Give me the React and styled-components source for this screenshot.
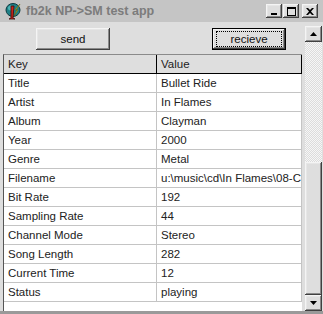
import React from 'react';
import styled, { createGlobalStyle } from 'styled-components';

const rows = [
  ['Title', 'Bullet Ride'],
  ['Artist', 'In Flames'],
  ['Album', 'Clayman'],
  ['Year', '2000'],
  ['Genre', 'Metal'],
  ['Filename', 'u:\\music\\cd\\In Flames\\08-Clayman\\01 - Bullet Ride.mp3'],
  ['Bit Rate', '192'],
  ['Sampling Rate', '44'],
  ['Channel Mode', 'Stereo'],
  ['Song Length', '282'],
  ['Current Time', '12'],
  ['Status', 'playing'],
];

const AppIcon = () => (
  <svg width="17" height="18" viewBox="0 0 17 18">
    <ellipse cx="8" cy="8" rx="7" ry="6.5" fill="#1f7f86" stroke="#0c3a40" strokeWidth="1" />
    <ellipse cx="6" cy="6" rx="3" ry="2.5" fill="#4fb5b5" />
    <path d="M6 4 L9 4 L8 16 L10 17 L4 17 L6 16 Z" fill="#c8241c" stroke="#3a0a08" strokeWidth="0.8" />
    <path d="M15 2 L11 8 L13 8 L9 14 L12 8 L10 8 Z" fill="#f4e13a" stroke="#6b5a00" strokeWidth="0.5" />
  </svg>
);

const CaptionGlyph = ({ kind }) => {
  if (kind === 'min') {
    return (
      <svg width="8" height="8" viewBox="0 0 8 8">
        <rect x="1" y="6" width="6" height="2" fill="#000" />
      </svg>
    );
  }
  if (kind === 'max') {
    return (
      <svg width="9" height="9" viewBox="0 0 9 9">
        <rect x="0.5" y="0.5" width="8" height="8" fill="none" stroke="#000" />
        <rect x="0" y="1" width="9" height="1" fill="#000" />
      </svg>
    );
  }
  return (
    <svg width="8" height="7" viewBox="0 0 8 7">
      <path d="M0 0 L2 0 L4 2 L6 0 L8 0 L5 3.5 L8 7 L6 7 L4 5 L2 7 L0 7 L3 3.5 Z" fill="#000" />
    </svg>
  );
};

const Arrow = ({ up }) => (
  <svg width="7" height="4" viewBox="0 0 7 4">
    <path d={up ? 'M3.5 0 L7 4 L0 4 Z' : 'M0 0 L7 0 L3.5 4 Z'} fill="#000" />
  </svg>
);

const App = () => {
  return (
    <>
      <GlobalStyle />
      <Window>
        <TitleBar>
          <AppIcon />
          <TitleText>fb2k NP-&gt;SM test app</TitleText>
          <CaptionGroup>
            <CaptionButton>
              <CaptionGlyph kind="min" />
            </CaptionButton>
            <CaptionButton>
              <CaptionGlyph kind="max" />
            </CaptionButton>
            <CaptionButton $gap>
              <CaptionGlyph kind="close" />
            </CaptionButton>
          </CaptionGroup>
        </TitleBar>
        <Body>
          <Main>
            <ButtonRow>
              <PushButton $left={33}>send</PushButton>
              <PushButton $left={102} $default>
                <FocusRect>recieve</FocusRect>
              </PushButton>
            </ButtonRow>
            <List>
              <HeaderRow>
                <HeaderCell $key>Key</HeaderCell>
                <HeaderCell>Value</HeaderCell>
              </HeaderRow>
              {rows.map(([k, v]) => (
                <Row key={k}>
                  <Cell $key>{k}</Cell>
                  <Cell>{v}</Cell>
                </Row>
              ))}
            </List>
          </Main>
          <ScrollBar>
            <ScrollButton>
              <Arrow up />
            </ScrollButton>
            <Track />
            <Thumb />
            <ScrollButton>
              <Arrow />
            </ScrollButton>
          </ScrollBar>
        </Body>
      </Window>
    </>
  );
};

export default App;

const GlobalStyle = createGlobalStyle`
  body {
    margin: 0;
    font-family: "Liberation Sans", Arial, sans-serif;
  }
`;

const raised = `
  box-shadow: inset -1px -1px #404040, inset 1px 1px #f4f4f4,
    inset -2px -2px #8a8a8a, inset 2px 2px #e6e6e6;
`;

const Window = styled.div`
  width: 323px;
  height: 314px;
  background: #dedede;
  display: flex;
  flex-direction: column;
  overflow: hidden;
  box-sizing: border-box;
  border-bottom: 3px solid #9a9a9a;
`;

const TitleBar = styled.div`
  height: 22px;
  flex-shrink: 0;
  background: #c5c5c5;
  display: flex;
  align-items: center;
  padding-left: 5px;
`;

const TitleText = styled.div`
  margin-left: 4px;
  font-weight: bold;
  font-size: 12.5px;
  color: #7c7c7c;
`;

const CaptionGroup = styled.div`
  margin-left: auto;
  margin-right: 5px;
  display: flex;
`;

const CaptionButton = styled.div`
  width: 16px;
  height: 14px;
  margin-left: ${(p) => (p.$gap ? '3px' : '1px')};
  background: #dedede;
  display: flex;
  align-items: center;
  justify-content: center;
  ${raised}
`;

const Body = styled.div`
  flex: 1;
  display: flex;
  min-height: 0;
`;

const Main = styled.div`
  flex: 1;
  display: flex;
  flex-direction: column;
  padding: 6px 0 0 3px;
  min-width: 0;
`;

const ButtonRow = styled.div`
  display: flex;
  height: 22px;
  flex-shrink: 0;
`;

const PushButton = styled.div`
  width: 74px;
  height: 22px;
  margin-left: ${(p) => p.$left}px;
  box-sizing: border-box;
  display: flex;
  align-items: center;
  justify-content: center;
  font-size: 11.5px;
  color: #111;
  background: #dedede;
  ${(p) =>
    p.$default
      ? `box-shadow: inset 0 0 0 1px #000, inset -2px -2px #404040, inset 2px 2px #f4f4f4, inset -3px -3px #8a8a8a;`
      : raised}
`;

const FocusRect = styled.div`
  width: 64px;
  height: 14px;
  border: 1px dotted #000;
  display: flex;
  align-items: center;
  justify-content: center;
`;

const List = styled.div`
  margin-top: 4px;
  width: 299px;
  flex: 1;
  background: #fff;
  border-top: 1px solid #8a8a8a;
  border-left: 1px solid #555;
  box-sizing: border-box;
  overflow: hidden;
`;

const HeaderRow = styled.div`
  display: flex;
  height: 18px;
  background: #dedede;
  border-bottom: 1px solid #000;
`;

const HeaderCell = styled.div`
  width: ${(p) => (p.$key ? '153px' : 'auto')};
  flex: ${(p) => (p.$key ? 'none' : '1')};
  border-right: 1px solid #000;
  padding-left: 4px;
  font-size: 11.5px;
  color: #222;
  line-height: 18px;
  box-sizing: border-box;
`;

const Row = styled.div`
  display: flex;
  height: 19px;
  border-bottom: 1px solid #c4c4c4;
  box-sizing: border-box;
`;

const Cell = styled.div`
  width: ${(p) => (p.$key ? '153px' : 'auto')};
  flex: ${(p) => (p.$key ? 'none' : '1')};
  min-width: 0;
  border-right: 1px solid #c4c4c4;
  padding-left: 4px;
  font-size: 11.5px;
  line-height: 18px;
  color: #222;
  white-space: nowrap;
  overflow: hidden;
  box-sizing: border-box;
`;

const ScrollBar = styled.div`
  width: 17px;
  margin: 4px 1px 0 2px;
  display: flex;
  flex-direction: column;
`;

const ScrollButton = styled.div`
  height: 16px;
  flex-shrink: 0;
  background: #dedede;
  display: flex;
  align-items: center;
  justify-content: center;
  ${raised}
`;

const Track = styled.div`
  flex: 1;
  background: repeating-conic-gradient(#f6f6f6 0 25%, #dcdcdc 0 50%) 0 0 / 2px 2px;
`;

const Thumb = styled.div`
  height: 133px;
  flex-shrink: 0;
  background: #dedede;
  ${raised}
`;
